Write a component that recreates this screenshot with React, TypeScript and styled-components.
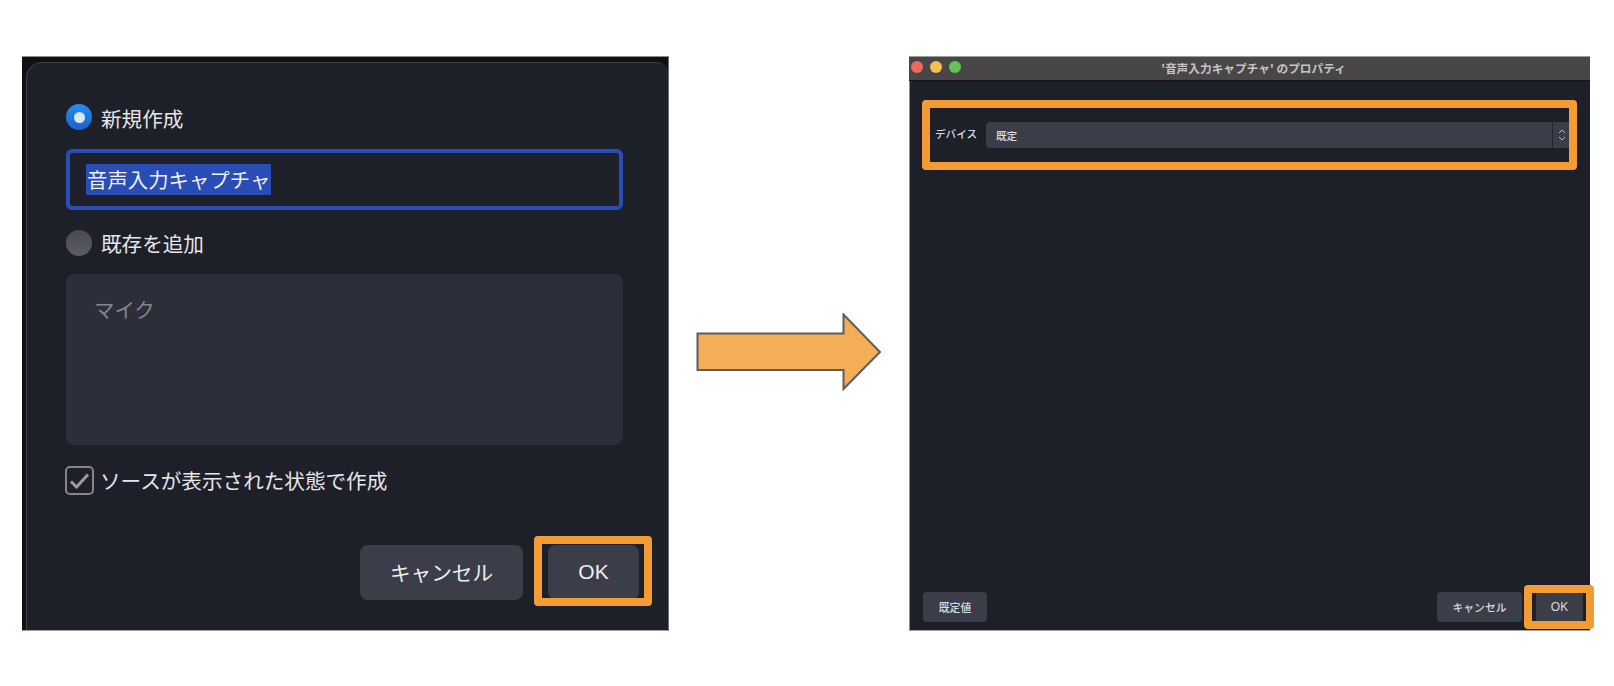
import React from "react";
import styled, { createGlobalStyle } from "styled-components";

const GlobalStyle = createGlobalStyle`
  html, body {
    margin: 0;
    padding: 0;
    background: #fff;
  }

  body {
    font-family: "Noto Sans CJK JP", "Liberation Sans", sans-serif;
  }
`;

const Page = styled.div`
  display: flex;
  align-items: flex-start;
  width: 1614px;
  height: 686px;
  padding: 56px 0 0 22px;
  box-sizing: border-box;
  overflow: hidden;
  background: #fff;
`;

/* left: the "new source" dialog */
const DialogShot = styled.div`
  box-sizing: border-box;
  width: 647px;
  height: 575px;
  padding: 5px 0 0 4px;
  background: #111113;
  border-top: 1px solid #8c8c8c;
  border-right: 1px solid #6d6e78;
  border-bottom: 1px solid #9a9ba3;
`;

const Dialog = styled.div`
  box-sizing: border-box;
  display: flex;
  flex-direction: column;
  height: 100%;
  padding: 41px 45px 30px 39px;
  background: #1e2029;
  border-top: 1px solid #3f4046;
  border-left: 1px solid #3f4046;
  border-top-left-radius: 16px;
  border-top-right-radius: 12px;
`;

const RadioRow = styled.div<{ $top?: number }>`
  display: flex;
  align-items: center;
  gap: 9px;
  height: 26px;
  margin-top: ${(p) => p.$top ?? 0}px;
  font-size: 20.6px;
  color: #e6e6e8;
`;

const RadioLabel = styled.span<{ $drop?: number }>`
  padding-top: ${(p) => p.$drop ?? 0}px;
`;

const Radio = styled.span<{ $on?: boolean }>`
  display: flex;
  align-items: center;
  justify-content: center;
  width: 26px;
  height: 26px;
  border-radius: 50%;
  background: ${(p) =>
    p.$on
      ? "linear-gradient(180deg, #2a8cee, #1662cf)"
      : "linear-gradient(180deg, #4a4b52, #5b5c63)"};

  &::after {
    content: "";
    display: ${(p) => (p.$on ? "block" : "none")};
    width: 11px;
    height: 11px;
    border-radius: 50%;
    background: #dbe8fb;
  }
`;

const NameInput = styled.div`
  box-sizing: border-box;
  display: flex;
  align-items: center;
  height: 61px;
  margin-top: 19px;
  padding-left: 16px;
  border: 4px solid #2a4db5;
  border-radius: 6px;
`;

const Selected = styled.span`
  height: 31px;
  line-height: 30px;
  padding: 0 1px;
  font-size: 20.4px;
  color: #eef0f6;
  background: #2a4db5;
  white-space: nowrap;
`;

const SourceList = styled.div`
  box-sizing: border-box;
  height: 171px;
  margin-top: 18px;
  padding: 18px 28px;
  border-radius: 8px;
  background: #2c2e39;
  font-size: 20.4px;
  line-height: 34px;
  color: #85868c;
`;

const CheckRow = styled.div`
  display: flex;
  align-items: center;
  gap: 6px;
  height: 28px;
  margin: 21px 0 0 -1px;
  font-size: 20.6px;
  color: #e6e6e8;
  white-space: nowrap;
`;

const CheckBox = styled.span`
  box-sizing: border-box;
  display: flex;
  align-items: center;
  justify-content: center;
  width: 29px;
  height: 29px;
  border: 2px solid #85868b;
  border-radius: 5px;
`;

const DialogFooter = styled.div`
  display: flex;
  justify-content: flex-end;
  gap: 25px;
  margin: auto -16px 0 0;
`;

const BigButton = styled.div<{ $width: number }>`
  position: relative;
  box-sizing: border-box;
  display: flex;
  align-items: center;
  justify-content: center;
  width: ${(p) => p.$width}px;
  height: 55px;
  padding-bottom: 2px;
  border-radius: 8px;
  background: #3b3e49;
  font-size: 20.6px;
  color: #eeeef0;
`;

const LatinLabel = styled.span<{ $size: number }>`
  font-family: "Liberation Sans", sans-serif;
  font-size: ${(p) => p.$size}px;
`;

/* orange marker drawn over the screenshot */
const Highlight = styled.div<{
  $top: number;
  $right: number;
  $bottom: number;
  $left: number;
}>`
  position: absolute;
  top: ${(p) => p.$top}px;
  right: ${(p) => p.$right}px;
  bottom: ${(p) => p.$bottom}px;
  left: ${(p) => p.$left}px;
  border: 8px solid #f39c33;
  border-radius: 4px;
  pointer-events: none;
`;

const Arrow = styled.svg`
  flex: none;
  margin: 257px 27px 0 27px;
`;

/* right: the properties window */
const PropsWindow = styled.div`
  box-sizing: border-box;
  display: flex;
  flex-direction: column;
  width: 681px;
  height: 575px;
  background: #1e2029;
  border-left: 1px solid #8e8f94;
  border-bottom: 1px solid #a4a5aa;
`;

const TitleBar = styled.div`
  box-sizing: border-box;
  display: grid;
  grid-template-columns: 1fr auto 1fr;
  align-items: center;
  flex: none;
  height: 25px;
  margin-left: -1px;
  padding: 0 0 3px 8px;
  background: #484646;
  border-top: 1px solid #9c9c9c;
  border-bottom: 1px solid #141418;
`;

const Lights = styled.div`
  display: flex;
  gap: 7px;
  margin-left: -6px;
`;

const Light = styled.span<{ $color: string }>`
  width: 12px;
  height: 12px;
  border-radius: 50%;
  background: ${(p) => p.$color};
`;

const WindowTitle = styled.div`
  font-size: 11.7px;
  font-weight: 700;
  color: #c4c4c4;
  white-space: nowrap;
`;

const DeviceRow = styled.div`
  position: relative;
  display: flex;
  align-items: center;
  gap: 9px;
  height: 26px;
  margin: 41px 13px 0 25px;
  font-size: 10.6px;
  font-weight: 500;
  color: #dcdce0;
`;

const DeviceLabel = styled.span`
  width: 42px;
  margin-top: -4px;
  white-space: nowrap;
`;

const DeviceSelect = styled.div`
  display: flex;
  align-items: center;
  flex: 1;
  height: 26px;
  padding-left: 10px;
  border-radius: 4px;
  background: #3b3e49;
`;

const SelectValue = styled.span`
  flex: 1;
`;

const Stepper = styled.span`
  display: flex;
  align-items: center;
  height: 26px;
  width: 25px;
  padding-left: 4px;
  box-sizing: border-box;
  border-left: 1px solid #24262f;
`;

const WindowFooter = styled.div`
  display: flex;
  justify-content: space-between;
  margin: auto 7px 8px 13px;
`;

const FooterGroup = styled.div`
  display: flex;
  gap: 14px;
`;

const SmallButton = styled.div<{ $width: number }>`
  position: relative;
  display: flex;
  align-items: center;
  justify-content: center;
  width: ${(p) => p.$width}px;
  height: 30px;
  border-radius: 4px;
  background: #3b3e49;
  font-size: 10.8px;
  font-weight: 500;
  color: #dcdce0;
`;

const App = () => (
  <Page>
    <GlobalStyle />
    <DialogShot>
      <Dialog>
        <RadioRow>
          <Radio $on />
          <RadioLabel $drop={2}>新規作成</RadioLabel>
        </RadioRow>
        <NameInput>
          <Selected>音声入力キャプチャ</Selected>
        </NameInput>
        <RadioRow $top={20}>
          <Radio />
          <RadioLabel>既存を追加</RadioLabel>
        </RadioRow>
        <SourceList>マイク</SourceList>
        <CheckRow>
          <CheckBox>
            <svg width="21" height="17" viewBox="0 0 21 17" fill="none">
              <path
                d="M2 9.5 L7.5 15 L19 2.5"
                stroke="#9b9ba0"
                strokeWidth="3"
              />
            </svg>
          </CheckBox>
          ソースが表示された状態で作成
        </CheckRow>
        <DialogFooter>
          <BigButton $width={163}>キャンセル</BigButton>
          <BigButton $width={91}>
            <LatinLabel $size={21}>OK</LatinLabel>
            <Highlight $top={-9} $right={-13} $bottom={-6} $left={-14} />
          </BigButton>
        </DialogFooter>
      </Dialog>
    </DialogShot>

    <Arrow width="186" height="78" viewBox="0 0 186 78">
      <path
        d="M1.5 20.5 H147.5 V1.5 L184 39 L147.5 76 V57 H1.5 Z"
        fill="#f4ae55"
        stroke="#5d5d5d"
        strokeWidth="2"
      />
    </Arrow>

    <PropsWindow>
      <TitleBar>
        <Lights>
          <Light $color="#ec6a5e" />
          <Light $color="#f4bf4f" />
          <Light $color="#61c554" />
        </Lights>
        <WindowTitle>'音声入力キャプチャ' のプロパティ</WindowTitle>
      </TitleBar>
      <DeviceRow>
        <DeviceLabel>デバイス</DeviceLabel>
        <DeviceSelect>
          <SelectValue>既定</SelectValue>
          <Stepper>
            <svg width="10" height="16" viewBox="0 0 10 16" fill="none">
              <path
                d="M2 6 L5 3 L8 6 M2 10 L5 13 L8 10"
                stroke="#b5b6bc"
                strokeWidth="1"
              />
            </svg>
          </Stepper>
        </DeviceSelect>
        <Highlight $top={-22} $right={0} $bottom={-22} $left={-13} />
      </DeviceRow>
      <WindowFooter>
        <SmallButton $width={64}>既定値</SmallButton>
        <FooterGroup>
          <SmallButton $width={85}>キャンセル</SmallButton>
          <SmallButton $width={47}>
            <LatinLabel $size={12}>OK</LatinLabel>
            <Highlight $top={-7} $right={-11} $bottom={-7} $left={-12} />
          </SmallButton>
        </FooterGroup>
      </WindowFooter>
    </PropsWindow>
  </Page>
);

export default App;
